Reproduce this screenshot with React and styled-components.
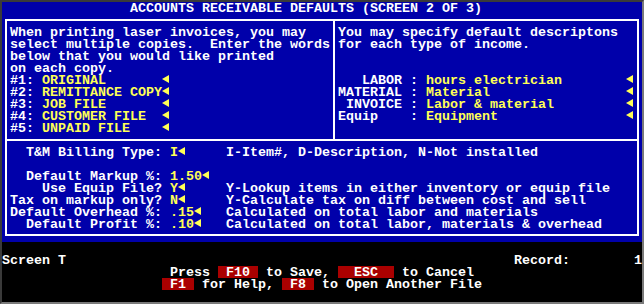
import React from 'react';
import styled, { createGlobalStyle } from 'styled-components';

// text-mode screen: 80 x 25 cells of 8 x 12 px
const cols = (n) => `${n * 8}px`;

const GlobalStyle = createGlobalStyle`
    html, body {
        margin: 0;
        padding: 0;
        background: #000;
    }
`;

const Window = styled.div`
    width: 644px;
    height: 304px;
    box-sizing: border-box;
    border: 2px solid #7a7a7a;
    border-top-color: #3a3a3a;
    border-left-color: #3a3a3a;
    background: #000;
    font-family: "Liberation Mono", "DejaVu Sans Mono", monospace;
    font-size: 13.333px;
    font-weight: bold;
    line-height: 14px;
    color: #fff;
    white-space: pre;
    display: flex;
    flex-direction: column;
`;

const BluePane = styled.div`
    height: 240px;
    background: #0000aa;
    display: flex;
    flex-direction: column;
`;

const BlackPane = styled.div`
    flex: 1;
    padding-top: 12px;
    display: flex;
    flex-direction: column;
`;

const Title = styled.div`
    height: 12px;
    padding-left: ${cols(16)};
`;

const Frame = styled.div`
    margin: 5px 0 0 3px;
    width: 634px;
    height: 217px;
    box-sizing: border-box;
    border: 2px solid #fff;
    display: flex;
    flex-direction: column;
`;

const TopSection = styled.div`
    display: flex;
    height: 120px;
    box-sizing: border-box;
    border-bottom: 2px solid #fff;
`;

const LeftPanel = styled.div`
    width: 328px;
    box-sizing: border-box;
    padding: 5px 3px;
    border-right: 2px solid #fff;
`;

const RightPanel = styled.div`
    flex: 1;
    padding: 5px 3px;
`;

const BottomSection = styled.div`
    flex: 1;
    padding: 5px 3px;
`;

const Line = styled.div`
    height: 12px;
    padding-left: ${(p) => cols(p.$indent || 0)};
`;

const Field = styled.span`
    display: inline-block;
    vertical-align: top;
    height: 12px;
    width: ${(p) => (p.$cols ? cols(p.$cols) : 'auto')};
    color: #ffff55;
`;

const Arrow = styled.span`
    display: inline-flex;
    align-items: center;
    vertical-align: top;
    width: 8px;
    height: 12px;

    &::before {
        content: "";
        margin-bottom: 2px;
        border-right: 7px solid #ffff55;
        border-top: 4px solid transparent;
        border-bottom: 4px solid transparent;
    }
`;

const IncomeRow = styled.div`
    display: grid;
    grid-template-columns: 64px 24px 200px 8px;
    height: 12px;
`;

const IncomeLabel = styled.span`
    text-align: ${(p) => p.$align || 'right'};
`;

const SettingRow = styled.div`
    display: grid;
    grid-template-columns: 160px 56px 1fr;
    height: 12px;
`;

const SettingLabel = styled.span`
    text-align: right;
    padding-right: 8px;
`;

const StatusLine = styled.div`
    display: flex;
    height: 12px;
`;

const StatusLeft = styled.span`
    flex: 1;
`;

const RecordBox = styled.span`
    width: ${cols(16)};
    display: flex;
    justify-content: space-between;
`;

const Key = styled.span`
    display: inline-block;
    vertical-align: top;
    height: 12px;
    width: ${(p) => cols(p.$cols)};
    background: #aa0000;
    text-align: center;
`;

const copies = ['ORIGINAL', 'REMITTANCE COPY', 'JOB FILE', 'CUSTOMER FILE', 'UNPAID FILE'];

const incomes = [
    { label: 'LABOR', value: 'hours electrician' },
    { label: 'MATERIAL', value: 'Material' },
    { label: 'INVOICE', value: 'Labor & material' },
    { label: 'Equip', value: 'Equipment', align: 'left' },
];

const settings = [
    { label: 'T&M Billing Type:', value: 'I', note: 'I-Item#, D-Description, N-Not installed' },
    null,
    { label: 'Default Markup %:', value: '1.50' },
    { label: 'Use Equip File?', value: 'Y', note: 'Y-Lookup items in either inventory or equip file' },
    { label: 'Tax on markup only?', value: 'N', note: 'Y-Calculate tax on diff between cost and sell' },
    { label: 'Default Overhead %:', value: '.15', note: 'Calculated on total labor and materials' },
    { label: 'Default Profit %:', value: '.10', note: 'Calculated on total labor, materials & overhead' },
];

export default function App() {
    return (
        <>
            <GlobalStyle />
            <Window>
                <BluePane>
                    <Title>ACCOUNTS RECEIVABLE DEFAULTS (SCREEN 2 OF 3)</Title>
                    <Frame>
                        <TopSection>
                            <LeftPanel>
                                <Line>When printing laser invoices, you may</Line>
                                <Line>select multiple copies.  Enter the words</Line>
                                <Line>below that you would like printed</Line>
                                <Line>on each copy.</Line>
                                {copies.map((copy, i) => (
                                    <Line key={copy}>
                                        {`#${i + 1}: `}
                                        <Field $cols={15}>{copy}</Field>
                                        <Arrow />
                                    </Line>
                                ))}
                            </LeftPanel>
                            <RightPanel>
                                <Line>You may specify default descriptons</Line>
                                <Line>for each type of income.</Line>
                                <Line />
                                <Line />
                                {incomes.map((item) => (
                                    <IncomeRow key={item.label}>
                                        <IncomeLabel $align={item.align}>{item.label}</IncomeLabel>
                                        <span>{' : '}</span>
                                        <Field>{item.value}</Field>
                                        <Arrow />
                                    </IncomeRow>
                                ))}
                            </RightPanel>
                        </TopSection>
                        <BottomSection>
                            {settings.map((s, i) =>
                                s ? (
                                    <SettingRow key={s.label}>
                                        <SettingLabel>{s.label}</SettingLabel>
                                        <span>
                                            <Field>{s.value}</Field>
                                            <Arrow />
                                        </span>
                                        <span>{s.note}</span>
                                    </SettingRow>
                                ) : (
                                    <Line key={i} />
                                )
                            )}
                        </BottomSection>
                    </Frame>
                </BluePane>
                <BlackPane>
                    <StatusLine>
                        <StatusLeft>Screen T</StatusLeft>
                        <RecordBox>
                            <span>Record:</span>
                            <span>1</span>
                        </RecordBox>
                    </StatusLine>
                    <Line $indent={21}>
                        {'Press '}
                        <Key $cols={5}>F10</Key>
                        {' to Save, '}
                        <Key $cols={7}>ESC</Key>
                        {' to Cancel'}
                    </Line>
                    <Line $indent={20}>
                        <Key $cols={4}>F1</Key>
                        {' for Help, '}
                        <Key $cols={4}>F8</Key>
                        {' to Open Another File'}
                    </Line>
                </BlackPane>
            </Window>
        </>
    );
}
